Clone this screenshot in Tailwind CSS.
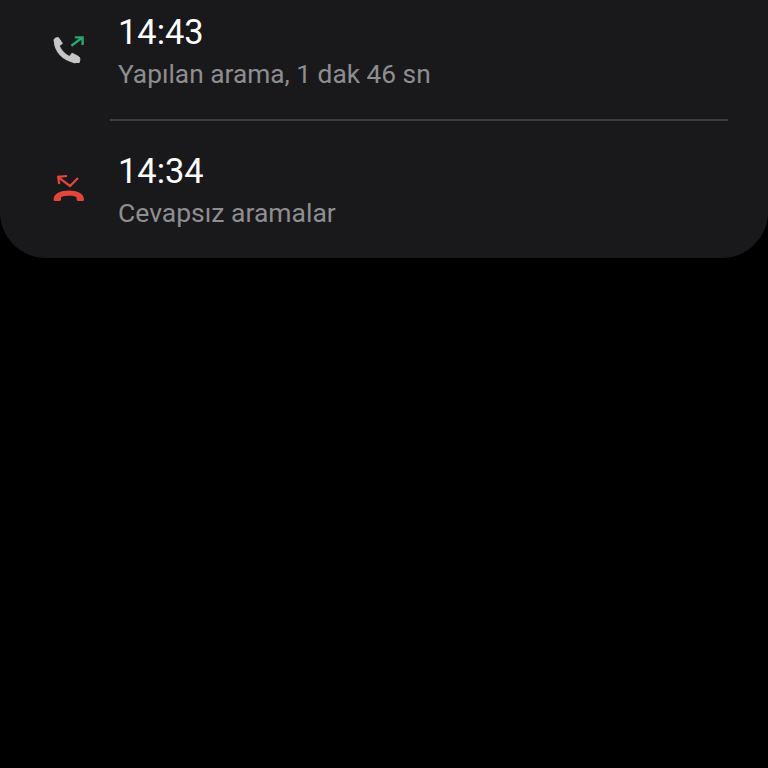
<!DOCTYPE html>
<html lang="tr">
<head>
<meta charset="UTF-8">
<meta name="viewport" content="width=device-width, initial-scale=1.0">
<title>Arama geçmişi</title>
<script src="https://cdn.jsdelivr.net/npm/@tailwindcss/browser@4"></script>
</head>
<body class="bg-black h-[768px] overflow-hidden font-['Roboto',sans-serif]">
<!-- Kart -->
<section class="bg-[#19191b] h-[258px] rounded-b-[46px] flex flex-col">
  <!-- Yapılan arama -->
  <div class="h-[119px] flex pl-[48px]">
    <svg class="w-10 h-10 mt-[30px]" viewBox="0 0 40 40" fill="none">
      <path d="M8.4 11C8.6 20 15.6 28 27 30.6" stroke="#c6c6c6" stroke-width="5.2" stroke-linecap="round"/>
      <path d="M6 10.4C6 9 7 8.2 8 8L10.4 7.6L14.4 13.4L10 16.6ZM21 27.2L24 23.2L30.4 26.4C31.6 27 32 28.6 31.8 30L31.2 32.6L25 32Z" fill="#c6c6c6" stroke="#c6c6c6" stroke-width="1" stroke-linejoin="round"/>
      <path d="M23.4 15.8L33.8 8M26.8 7.4H34.6V15" stroke="#23a86f" stroke-width="2.4"/>
    </svg>
    <div class="ml-[30px]">
      <p class="text-[34.4px] leading-[40px] mt-[12px] text-white">14:43</p>
      <p class="text-[26.3px] leading-[30px] mt-[7px] text-[#8e8e90]">Yapılan arama, 1 dak 46 sn</p>
    </div>
  </div>
  <div class="h-[2px] ml-[110px] mr-[40px] bg-[#3d3d3f]"></div>
  <!-- Cevapsız aramalar -->
  <div class="flex-1 flex pl-[48px]">
    <svg class="w-10 h-10 mt-[48px]" viewBox="0 0 40 40" fill="none">
      <path d="M10.8 8.6L22 17L30 9" stroke="#e5463c" stroke-width="2.2"/>
      <path d="M19 7L10.2 7.8L11.2 15" stroke="#e5463c" stroke-width="2.2"/>
      <path d="M5.6 30.4C5.6 24.4 12.8 21.4 21 21.4C29.2 21.4 36 24.4 36 30.4C36 31.4 35.2 32 34.4 32H30C29.2 32 28.6 31.4 28.6 30.6V28.8C28.6 27.6 25 26.8 21 26.8C17 26.8 13 27.6 13 28.8V30.6C13 31.4 12.4 32 11.6 32H7.2C6.4 32 5.6 31.4 5.6 30.4Z" fill="#e5463c"/>
    </svg>
    <div class="ml-[30px]">
      <p class="text-[34.4px] leading-[40px] mt-[30px] text-white">14:34</p>
      <p class="text-[26.5px] leading-[30px] mt-[7px] text-[#8e8e90]">Cevapsız aramalar</p>
    </div>
  </div>
</section>
</body>
</html>
